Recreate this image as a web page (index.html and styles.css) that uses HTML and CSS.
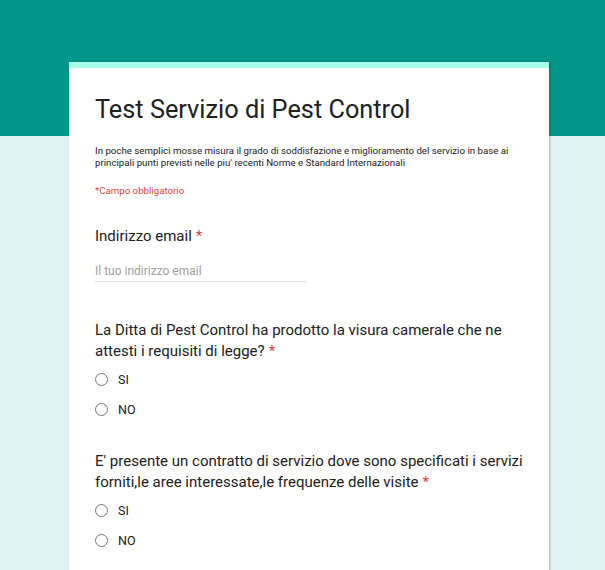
FILE: index.html
```html
<!DOCTYPE html>
<html lang="it">
<head>
<meta charset="utf-8">
<title>Test Servizio di Pest Control</title>
<link rel="stylesheet" href="styles.css">
</head>
<body>
<div class="page">
  <div class="card">
    <div class="accent"></div>
    <div class="head">
      <h1 class="title">Test Servizio di Pest Control</h1>
      <p class="desc">In poche semplici mosse misura il grado di soddisfazione e miglioramento del servizio in base ai principali punti previsti nelle piu' recenti Norme e Standard Internazionali</p>
      <p class="req">*Campo obbligatorio</p>
    </div>
    <div class="item">
      <div class="q">Indirizzo email<span class="star">*</span></div>
      <div class="input">Il tuo indirizzo email</div>
    </div>
    <div class="item">
      <div class="q">La Ditta di Pest Control ha prodotto la visura camerale che ne attesti i requisiti di legge?<span class="star">*</span></div>
      <div class="opts">
        <div class="opt"><span class="radio"></span><span class="lbl">SI</span></div>
        <div class="opt"><span class="radio"></span><span class="lbl">NO</span></div>
      </div>
    </div>
    <div class="item">
      <div class="q">E' presente un contratto di servizio dove sono specificati i servizi forniti,le aree interessate,le frequenze delle visite<span class="star">*</span></div>
      <div class="opts">
        <div class="opt"><span class="radio"></span><span class="lbl">SI</span></div>
        <div class="opt"><span class="radio"></span><span class="lbl">NO</span></div>
      </div>
    </div>
  </div>
</div>
</body>
</html>
```
FILE: styles.css
```css
html, body {
  margin: 0;
  padding: 0;
}
body {
  background: linear-gradient(#009688 0, #009688 136px, #e0f2f1 136px);
  font-family: Roboto, "Liberation Sans", sans-serif;
  color: #212121;
  min-height: 570px;
}
.page {
  padding-top: 62px;
  padding-left: 69px;
}
.card {
  width: 480px;
  background: #fff;
  box-shadow: 1px 0 2px rgba(0,0,0,0.25);
  padding-bottom: 40px;
}
.accent {
  height: 6px;
  background: #a7ffeb;
}
.head {
  padding: 26px 26px 0 26px;
}
.title {
  margin: 0;
  font-size: 25.3px;
  line-height: 32px;
  font-weight: 400;
  color: #212121;
}
.desc {
  margin: 19px 0 0 0;
  font-size: 9.7px;
  line-height: 11.5px;
  color: #212121;
}
.req {
  margin: 17px 0 0 0;
  font-size: 9.7px;
  line-height: 12px;
  color: #db4437;
}
.item {
  padding: 29px 20px 0 26px;
}
.item + .item {
  padding-top: 38px;
}
.item + .item + .item {
  padding-top: 27px;
}
.q {
  font-size: 15px;
  line-height: 21px;
  color: #212121;
}
.star {
  color: #db4437;
  margin-left: 4px;
}
.input {
  margin-top: 17px;
  width: 212px;
  font-size: 12px;
  line-height: 14px;
  color: #9e9e9e;
  padding-bottom: 3px;
  border-bottom: 1px solid #e0e0e0;
}
.opts {
  margin-top: 2px;
}
.opt {
  display: flex;
  align-items: center;
  height: 30px;
}
.radio {
  width: 11px;
  height: 11px;
  border: 1.5px solid #757575;
  border-radius: 50%;
}
.lbl {
  margin-left: 10px;
  font-size: 12.5px;
  color: #212121;
}
```
